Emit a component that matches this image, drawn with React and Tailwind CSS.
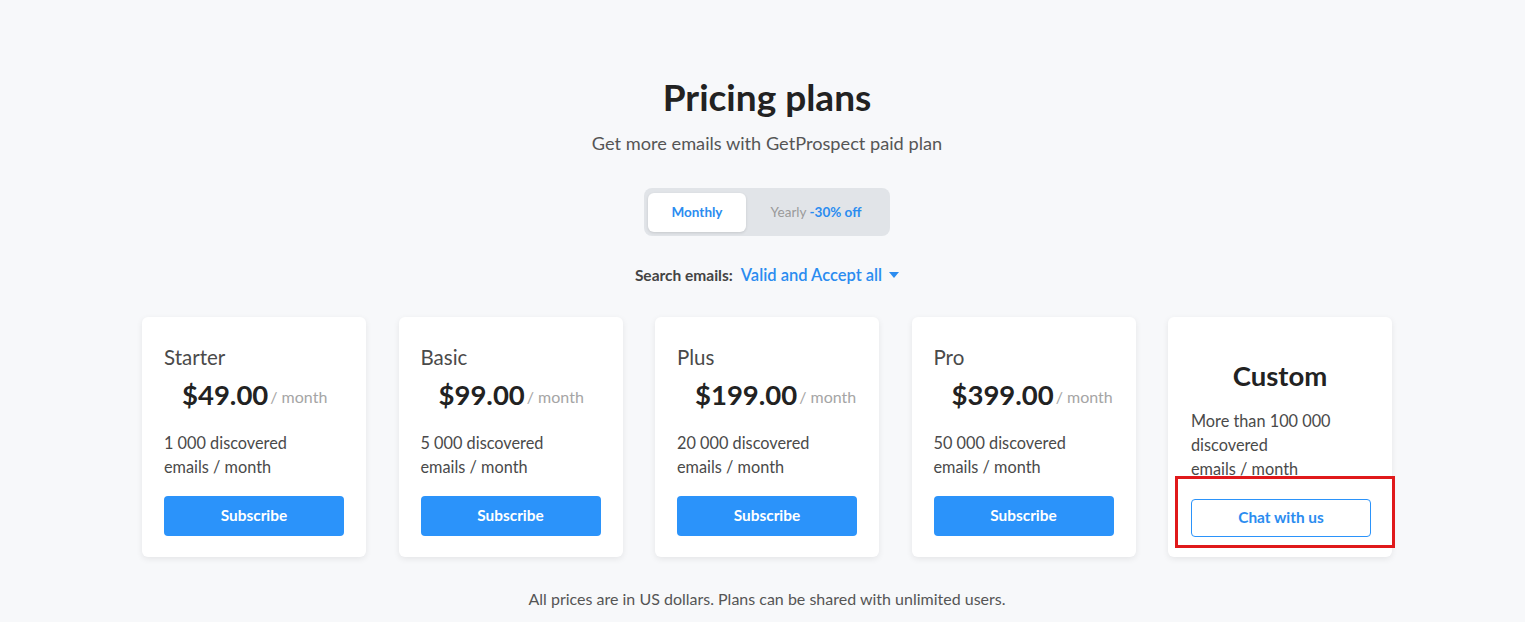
import React from 'react';

const plans = [
  { name: 'Starter', price: '$49.00', emails: '1 000' },
  { name: 'Basic', price: '$99.00', emails: '5 000' },
  { name: 'Plus', price: '$199.00', emails: '20 000' },
  { name: 'Pro', price: '$399.00', emails: '50 000' },
];

const PlanCard = ({ plan }) => (
  <div className="w-[224px] h-[240px] bg-white rounded-md shadow-[0_2px_6px_rgba(0,0,0,0.08)] pt-[27px] px-[22px] flex flex-col">
    <div className="text-[20.5px] text-[#4a4a4a] leading-[26px]">{plan.name}</div>
    <div className="flex items-baseline pl-[18px] mt-[8px]">
      <span className="text-[27.5px] font-bold text-[#222] leading-[34px]">{plan.price}</span>
      <span className="text-[16px] text-[#a5a5a5] ml-[2px] relative -top-[2px]">/ month</span>
    </div>
    <div className="mt-[19px] text-[16.3px] text-[#4a4a4a] leading-[24px]">
      {plan.emails} discovered
      <br />
      emails / month
    </div>
    <button className="mt-[17px] w-[180px] h-[40px] bg-[#2b93fa] rounded-[4px] text-white text-[15.4px] font-bold">
      Subscribe
    </button>
  </div>
);

export default function App() {
  return (
    <div className="min-h-[622px] bg-[#f7f8fa] font-['Lato','Liberation_Sans',sans-serif] flex flex-col items-center pt-[73px] pl-[9px]">
      <h1 className="text-[37px] font-bold text-[#222] leading-[48px]">Pricing plans</h1>
      <p className="mt-[10px] text-[18.2px] text-[#555] leading-[24px]">Get more emails with GetProspect paid plan</p>

      <div className="mt-[33px] w-[246px] h-[48px] bg-[#e1e4e8] rounded-[8px] p-[4px] flex items-center">
        <div className="w-[98px] h-[39px] bg-white rounded-[6px] shadow-[0_1px_3px_rgba(0,0,0,0.12)] flex items-center justify-center text-[13.5px] font-bold text-[#2b8cf0]">
          Monthly
        </div>
        <div className="flex-1 text-center text-[13.5px] text-[#9a9a9a]">
          Yearly <span className="font-bold text-[#2b8cf0]">-30% off</span>
        </div>
      </div>

      <div className="mt-[28px] flex items-center text-[15.5px] leading-[22px]">
        <span className="font-bold text-[#444]">Search emails:</span>
        <span className="ml-[8px] text-[16.5px] font-semibold text-[#2b8cf0]">Valid and Accept all</span>
        <svg className="ml-[7px]" width="10" height="6" viewBox="0 0 10 6">
          <path d="M0 0 L10 0 L5 6 Z" fill="#2b8cf0" />
        </svg>
      </div>

      <div className="mt-[31px] flex gap-[32.5px]">
        {plans.map((p) => (
          <PlanCard key={p.name} plan={p} />
        ))}
        <div className="relative w-[224px] h-[240px] bg-white rounded-md shadow-[0_2px_6px_rgba(0,0,0,0.08)] pt-[42px] px-[23px] flex flex-col">
          <div className="text-center text-[27.5px] font-bold text-[#222] leading-[34px]">Custom</div>
          <div className="mt-[16px] text-[16.3px] text-[#4a4a4a] leading-[24px]">
            More than 100 000
            <br />
            discovered
            <br />
            emails / month
          </div>
          <button className="mt-[18px] w-[180px] h-[38px] bg-white border border-[#2b93fa] rounded-[4px] text-[#2b8cf0] text-[15.4px] font-bold">
            Chat with us
          </button>
          <div className="absolute left-[7px] top-[159px] w-[220px] h-[72px] border-[3px] border-[#e0191b] pointer-events-none" />
        </div>
      </div>

      <p className="mt-[30px] text-[16px] text-[#555]">All prices are in US dollars. Plans can be shared with unlimited users.</p>
    </div>
  );
}
